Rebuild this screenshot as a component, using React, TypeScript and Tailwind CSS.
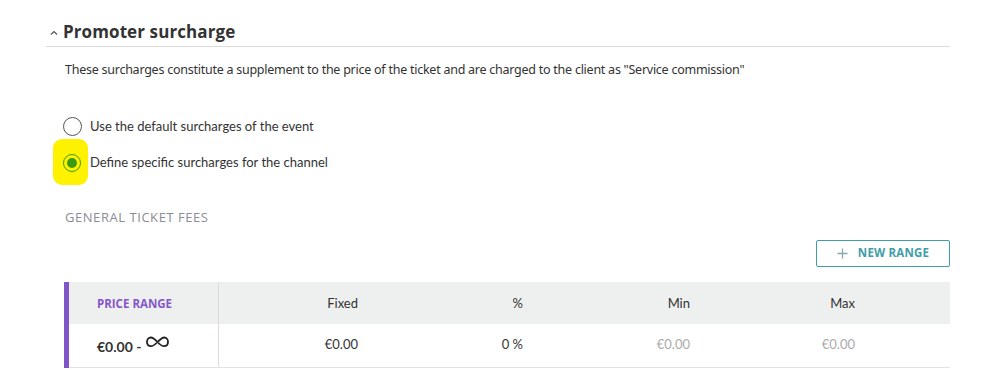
import React from "react";

export default function App() {
  const body = { fontFamily: "Lato, 'Noto Sans', sans-serif" };
  return (
    <div className="w-[997px] h-[388px] bg-white overflow-hidden relative" style={body}>
      <div className="pl-[46px] pr-[47px] pt-[20px]">
        <div className="flex items-center h-[24px] border-b border-[#dcdcdc] pb-[2px] box-content">
          <svg width="10" height="8" viewBox="0 0 10 8" className="ml-[3px] mr-[4px] mt-[2px]">
            <path d="M2 5.5 L5 2.5 L8 5.5" stroke="#555" strokeWidth="1.2" fill="none" />
          </svg>
          <span className="text-[17px] font-bold text-[#333] tracking-[0.1px]" style={{ fontFamily: "'Open Sans', sans-serif" }}>
            Promoter surcharge
          </span>
        </div>
        <p className="pl-[19px] mt-[15px] text-[12.5px] text-[#333] leading-[16px]" style={{ fontFamily: "'Noto Sans', sans-serif", letterSpacing: "-0.25px" }}>
          These surcharges constitute a supplement to the price of the ticket and are charged to the client as "Service commission"
        </p>
        <div className="mt-[39px] flex flex-col gap-[17px] pl-[17px]">
          <div className="flex items-center h-[19px]">
            <span className="w-[19px] h-[19px] rounded-full border-[1.5px] border-[#555] bg-white" />
            <span className="ml-[8px] text-[13px] text-[#333]">Use the default surcharges of the event</span>
          </div>
          <div className="flex items-center h-[19px] relative">
            <span className="absolute left-[-10px] top-[-14px] w-[35px] h-[46px] bg-[#fef200] rounded-[9px]" />
            <span className="relative w-[18px] h-[18px] rounded-full border-[1.5px] border-[#3a9a12] flex items-center justify-center">
              <span className="w-[10px] h-[10px] rounded-full bg-[#3a9a12]" />
            </span>
            <span className="relative ml-[9px] text-[13px] text-[#333]">Define specific surcharges for the channel</span>
          </div>
        </div>
        <div className="pl-[19px] mt-[36px] text-[13px] text-[#8c8c96] tracking-[0.55px]" style={{ fontFamily: "'Open Sans', sans-serif" }}>
          GENERAL TICKET FEES
        </div>
        <div className="flex justify-end mt-[12px]">
          <button className="w-[134px] h-[27px] border border-[#3f9ea6] rounded-[2px] flex items-center justify-center gap-[10px] text-[11.5px] font-bold text-[#3f9ea6] tracking-[0.2px]" style={{ fontFamily: "'Open Sans', sans-serif" }}>
            <svg width="11" height="11" viewBox="0 0 11 11">
              <path d="M5.5 0.5 V10.5 M0.5 5.5 H10.5" stroke="#8aa" strokeWidth="1.3" />
            </svg>
            NEW RANGE
          </button>
        </div>
        <div className="mt-[15px] ml-[18px] border-l-[5px] border-[#7f55c9]">
          <div className="flex h-[42px] bg-[#eef0ef] items-center text-[13px] text-[#333]">
            <div className="w-[150px] h-full border-r border-[#dcdcdc] flex items-center pl-[28px] pt-[2px] text-[11.5px] font-bold text-[#8556cc]" style={{ fontFamily: "'Open Sans', sans-serif" }}>
              PRICE RANGE
            </div>
            <div className="w-[165px] text-right pr-[26px] pt-[2px]">Fixed</div>
            <div className="w-[165px] text-right pr-[26px] pt-[2px]">%</div>
            <div className="w-[167px] text-right pr-[26px] pt-[2px]">Min</div>
            <div className="w-[165px] text-right pr-[26px] pt-[2px]">Max</div>
          </div>
          <div className="flex h-[44px] items-center border-b border-[#e3e3e3] text-[13px] text-[#333]">
            <div className="w-[150px] h-full border-r border-[#dcdcdc] flex items-center pl-[28px]">
              <span className="font-bold text-[14px] mt-[2px]">€0.00 -</span>
              <svg width="23" height="12" viewBox="0 0 23 12" className="ml-[5px] mb-[7px]">
                <path d="M11.5 6 C8.5 2.8 7 1.5 4.8 1.5 C2.5 1.5 1 3.5 1 5.8 C1 8.3 2.6 10.2 5 10.2 C7.3 10.2 8.8 8.8 11.5 6 C14.5 3 16 1.5 18.2 1.5 C20.5 1.5 22 3.5 22 5.8 C22 8.3 20.4 10.2 18 10.2 C15.8 10.2 14.3 9 11.5 6 Z" stroke="#222" strokeWidth="1.8" fill="none" />
              </svg>
            </div>
            <div className="w-[165px] text-right pr-[26px]">€0.00</div>
            <div className="w-[165px] text-right pr-[26px]">0 %</div>
            <div className="w-[167px] text-right pr-[26px] text-[#aaa]">€0.00</div>
            <div className="w-[165px] text-right pr-[26px] text-[#aaa]">€0.00</div>
          </div>
        </div>
      </div>
    </div>
  );
}
